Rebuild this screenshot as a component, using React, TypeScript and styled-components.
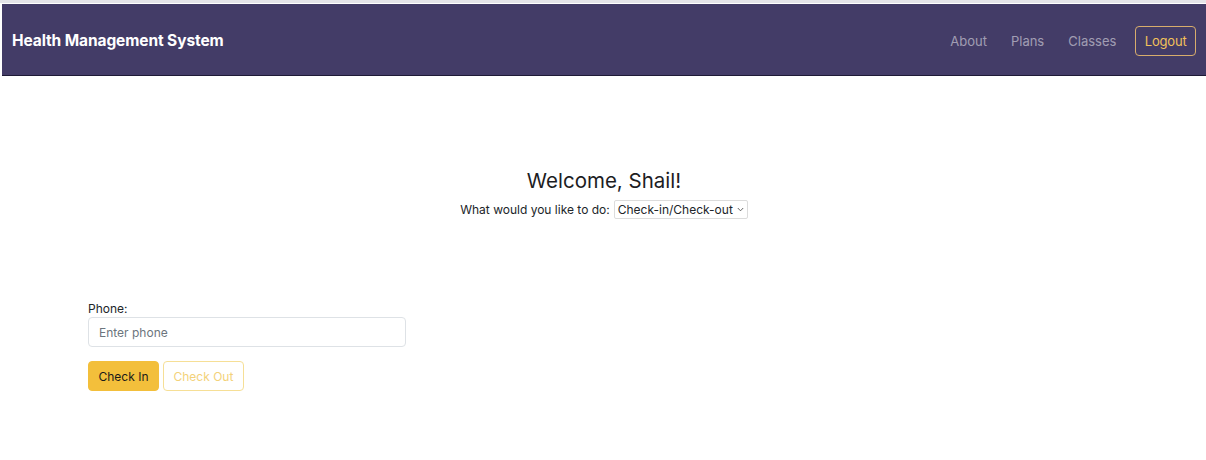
import React from "react";
import styled, { createGlobalStyle } from "styled-components";

const Global = createGlobalStyle`
  html, body { margin: 0; padding: 0; background: #ffffff; }
  body { font-family: Inter, "Noto Sans", Arial, sans-serif; color: #212529; }
  * { box-sizing: border-box; }
`;

const Page = styled.div`
  width: 1206px;
  height: 460px;
  padding-top: 4px;
  padding-left: 2px;
  background: #fff;
  border-top: 3px solid #e4e4e8;
  display: flex;
  flex-direction: column;
`;

const NavBar = styled.nav`
  height: 72px;
  background: #433c67;
  border-bottom: 1px solid #1e1a36;
  display: flex;
  align-items: center;
  justify-content: space-between;
  padding: 2px 10px 0 10px;
  margin-top: -3px;
`;

const Brand = styled.div`
  color: #ffffff;
  font-weight: 700;
  font-size: 15.5px;
  letter-spacing: -0.1px;
`;

const NavLinks = styled.div`
  display: flex;
  align-items: center;
`;

const NavLink = styled.a`
  color: rgba(255, 255, 255, 0.5);
  font-size: 13px;
  padding: 0 12px;
  text-decoration: none;
  &:first-child { padding-left: 0; }
`;

const LogoutButton = styled.button`
  margin-left: 7px;
  height: 30px;
  padding: 0 8.5px;
  background: transparent;
  border: 1px solid #d8ad6c;
  border-radius: 4px;
  color: #f2c15a;
  font-family: inherit;
  font-size: 13px;
  letter-spacing: -0.2px;
`;

const Welcome = styled.section`
  display: flex;
  flex-direction: column;
  align-items: center;
  margin-top: 92px;
`;

const Title = styled.h1`
  margin: 0;
  font-size: 20.5px;
  font-weight: 400;
  color: #1d1d1f;
`;

const ChoiceRow = styled.div`
  display: flex;
  align-items: center;
  gap: 4px;
  margin-top: 7px;
  font-size: 12px;
  color: #212529;
`;

const Select = styled.div`
  display: flex;
  align-items: center;
  gap: 4px;
  height: 19px;
  padding: 0 3px;
  border: 1px solid #dcdcdc;
  border-radius: 2px;
  font-size: 12px;
  color: #212529;
`;

const Form = styled.form`
  display: flex;
  flex-direction: column;
  align-items: flex-start;
  margin: 82px 0 0 86px;
`;

const Label = styled.label`
  font-size: 12px;
  color: #212529;
  margin-bottom: 1px;
`;

const Input = styled.input`
  width: 318px;
  height: 30px;
  padding: 0 10px;
  border: 1px solid #dee2e6;
  border-radius: 4px;
  font-family: inherit;
  font-size: 12px;
  color: #212529;
  &::placeholder { color: #6c757d; }
`;

const ButtonRow = styled.div`
  display: flex;
  gap: 4px;
  margin-top: 14px;
`;

const ActionButton = styled.button<{ $solid?: boolean }>`
  height: 30px;
  padding: 0 9.5px;
  border-radius: 4px;
  font-family: inherit;
  font-size: 12px;
  border: 1px solid ${(p) => (p.$solid ? "#f3bf3b" : "#f6df96")};
  background: ${(p) => (p.$solid ? "#f3bf3b" : "#ffffff")};
  color: ${(p) => (p.$solid ? "#1a1a1a" : "#f3d27a")};
`;

export default function App() {
  return (
    <>
      <Global />
      <Page>
        <NavBar>
          <Brand>Health Management System</Brand>
          <NavLinks>
            <NavLink>About</NavLink>
            <NavLink>Plans</NavLink>
            <NavLink>Classes</NavLink>
            <LogoutButton>Logout</LogoutButton>
          </NavLinks>
        </NavBar>
        <Welcome>
          <Title>Welcome, Shail!</Title>
          <ChoiceRow>
            <span>What would you like to do:</span>
            <Select>
              Check-in/Check-out
              <svg width="7" height="5" viewBox="0 0 7 5">
                <path d="M0.8 1 L3.5 3.8 L6.2 1" fill="none" stroke="#555" strokeWidth="0.9" />
              </svg>
            </Select>
          </ChoiceRow>
        </Welcome>
        <Form>
          <Label>Phone:</Label>
          <Input placeholder="Enter phone" />
          <ButtonRow>
            <ActionButton type="button" $solid>Check In</ActionButton>
            <ActionButton type="button">Check Out</ActionButton>
          </ButtonRow>
        </Form>
      </Page>
    </>
  );
}
